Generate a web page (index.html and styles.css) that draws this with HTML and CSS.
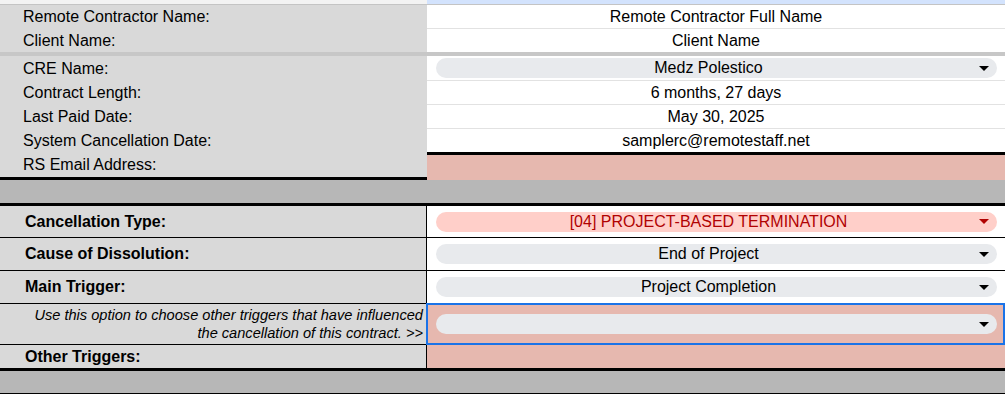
FILE: index.html
```html
<!DOCTYPE html>
<html>
<head>
	<title>Cancellation Form</title>
	<link rel="stylesheet" href="styles.css">
</head>
<body>
	<div class="sheet">
		<div class="row hdr">
			<div class="cell"></div>
			<div class="cell"></div>
		</div>

		<div class="row r1">
			<div class="cell label">Remote Contractor Name:</div>
			<div class="cell value line">Remote Contractor Full Name</div>
		</div>
		<div class="row r2">
			<div class="cell label">Client Name:</div>
			<div class="cell value">Client Name</div>
		</div>
		<div class="freeze"></div>

		<div class="row r3">
			<div class="cell label">CRE Name:</div>
			<div class="cell value line">
				<div class="chip"><span>Medz Polestico</span><i class="arrow"></i></div>
			</div>
		</div>
		<div class="row r4">
			<div class="cell label">Contract Length:</div>
			<div class="cell value line">6 months, 27 days</div>
		</div>
		<div class="row r4">
			<div class="cell label">Last Paid Date:</div>
			<div class="cell value line">May 30, 2025</div>
		</div>
		<div class="row r5">
			<div class="cell label">System Cancellation Date:</div>
			<div class="cell value">samplerc@remotestaff.net</div>
		</div>
		<div class="row r6">
			<div class="cell label thick-bottom">RS Email Address:</div>
			<div class="cell pink thick-top"></div>
		</div>
		<div class="band thick"></div>

		<div class="row big">
			<div class="cell label bold">Cancellation Type:</div>
			<div class="cell value">
				<div class="chip red"><span>[04] PROJECT-BASED TERMINATION</span><i class="arrow"></i></div>
			</div>
		</div>
		<div class="row big b2">
			<div class="cell label bold">Cause of Dissolution:</div>
			<div class="cell value">
				<div class="chip"><span>End of Project</span><i class="arrow"></i></div>
			</div>
		</div>
		<div class="row big b2">
			<div class="cell label bold">Main Trigger:</div>
			<div class="cell value">
				<div class="chip"><span>Project Completion</span><i class="arrow"></i></div>
			</div>
		</div>
		<div class="row note">
			<div class="cell label hint">Use this option to choose other triggers that have influenced the cancellation of this contract. &gt;&gt;</div>
			<div class="cell value pink selected">
				<div class="chip"><span></span><i class="arrow"></i></div>
			</div>
		</div>
		<div class="row other">
			<div class="cell label bold">Other Triggers:</div>
			<div class="cell pink"></div>
		</div>
		<div class="band thin"></div>
	</div>
</body>
</html>
```

FILE: styles.css
```css
body{
	margin: 0;
	background: #fff;
	font-family: "Liberation Sans", Arial, sans-serif;
	font-size: 16px;
	color: #000;
}
.sheet{
	width: 1005px;
}
.row{
	display: grid;
	grid-template-columns: 427px 1fr;
	box-sizing: border-box;
}
.cell{
	box-sizing: border-box;
	display: flex;
	align-items: center;
}
.hdr{
	height: 5px;
	border-bottom: 1px solid #c4c4c4;
}
.hdr .cell:first-child{
	background: #f3f3f3;
}
.hdr .cell:last-child{
	background: #d3e3fd;
}
.label{
	background: #d9d9d9;
	padding-left: 23px;
	white-space: nowrap;
}
.value{
	background: #fff;
	justify-content: center;
}
.line{
	border-bottom: 1px solid #e2e2e2;
}
.r1{ height: 24px; }
.r2{ height: 23px; }
.r3{ height: 25px; }
.r4{ height: 24px; }
.r5{ height: 23px; }
.r6{ height: 28px; }
.freeze{
	height: 4px;
	background: #c7c7c7;
}
.thick-bottom{
	border-bottom: 3px solid #000;
}
.thick-top{
	border-top: 3px solid #000;
}
.pink{
	background: #e6b8af;
}
.band{
	background: #b7b7b7;
	box-sizing: border-box;
}
.band.thick{
	height: 26px;
	border-bottom: 3px solid #000;
}
.band.thin{
	height: 23px;
	border-bottom: 1px solid #000;
}

/* lower block */
.big{
	height: 32px;
	border-bottom: 1px solid #000;
}
.big.b2{
	height: 33px;
}
.note{
	height: 41px;
	border-bottom: 1px solid #000;
}
.other{
	height: 26px;
	border-bottom: 3px solid #000;
}
.big .label, .note .label, .other .label{
	border-right: 1px solid #000;
}
.bold{
	font-weight: bold;
	padding-left: 25px;
}
.hint{
	font-style: italic;
	font-size: 14.6px;
	line-height: 18px;
	white-space: normal;
	text-align: right;
	justify-content: flex-end;
	padding: 0 3px 1px 30px;
}
.selected{
	position: relative;
}
.selected::after{
	content: "";
	position: absolute;
	top: -1px;
	left: -1px;
	right: 0;
	bottom: -1px;
	border: 2px solid #1a73e8;
}

.chip{
	flex: 1;
	height: 20px;
	margin: 0 8px 0 9px;
	border-radius: 10px;
	background: #e8eaed;
	display: grid;
	grid-template-columns: 1fr 16px;
	align-items: center;
	text-align: center;
	line-height: 20px;
}
.chip.red{
	background: #ffcfc9;
	color: #b10202;
}
.arrow{
	justify-self: end;
	margin-right: 8px;
	width: 0;
	height: 0;
	border-left: 5px solid transparent;
	border-right: 5px solid transparent;
	border-top: 5px solid #000;
}
.red .arrow{
	border-top-color: #b10202;
}
```
